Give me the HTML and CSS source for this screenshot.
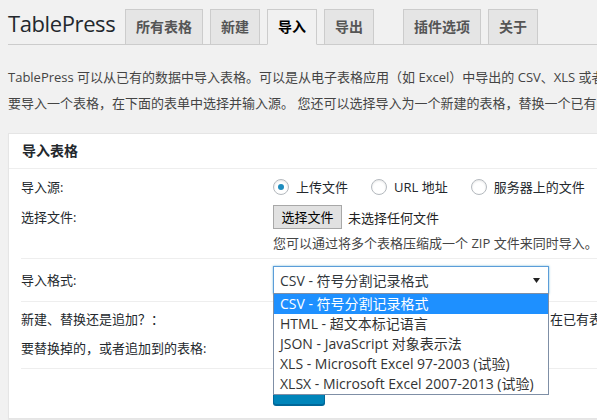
FILE: index.html
```html
<!DOCTYPE html>
<html lang="zh-CN">
<head>
<meta charset="utf-8">
<title>TablePress 导入</title>
<link rel="stylesheet" href="styles.css">
</head>
<body>
<div class="wrap">
  <div class="head">
    <h1 class="title">TablePress</h1>
    <nav class="tabs">
      <a class="tab">所有表格</a>
      <a class="tab">新建</a>
      <a class="tab active">导入</a>
      <a class="tab">导出</a>
      <span class="spacer"></span>
      <a class="tab">插件选项</a>
      <a class="tab">关于</a>
    </nav>
  </div>
  <p class="intro">TablePress 可以从已有的数据中导入表格。可以是从电子表格应用（如 Excel）中导出的 CSV、XLS 或者 XLSX 文件，也可以是 HTML 或 JSON 文件。</p>
  <p class="intro">要导入一个表格，在下面的表单中选择并输入源。 您还可以选择导入为一个新建的表格，替换一个已有的表格，或者将数据追加到一个已有的表格。</p>

  <div class="postbox">
    <h2 class="postbox-title">导入表格</h2>
    <div class="inside">
      <div class="row row-source">
        <div class="label">导入源:</div>
        <div class="field radios">
          <label class="radio-item"><span class="radio checked"></span>上传文件</label>
          <label class="radio-item"><span class="radio"></span>URL 地址</label>
          <label class="radio-item"><span class="radio"></span>服务器上的文件</label>
        </div>
      </div>
      <div class="row row-file sep">
        <div class="label label-file">选择文件:</div>
        <div class="field">
          <div class="file-line">
            <span class="file-btn">选择文件</span>
            <span class="file-name">未选择任何文件</span>
          </div>
          <div class="description">您可以通过将多个表格压缩成一个 ZIP 文件来同时导入。</div>
        </div>
      </div>
      <div class="row row-format sep">
        <div class="label">导入格式:</div>
        <div class="field">
          <div class="select-wrap">
            <div class="select">
              <span>CSV - 符号分割记录格式</span>
              <svg class="arrow" width="7" height="5" viewBox="0 0 7 5"><polygon points="0,0 7,0 3.5,5" fill="#222"/></svg>
            </div>
            <ul class="dropdown">
              <li class="option selected">CSV - 符号分割记录格式</li>
              <li class="option">HTML - 超文本标记语言</li>
              <li class="option">JSON - JavaScript 对象表示法</li>
              <li class="option">XLS - Microsoft Excel 97-2003 (试验)</li>
              <li class="option">XLSX - Microsoft Excel 2007-2013 (试验)</li>
            </ul>
          </div>
        </div>
      </div>
      <div class="row row-type">
        <div class="label">新建、替换还是追加？：</div>
        <div class="field radios radios-wide">
          <label class="radio-item"><span class="radio checked"></span>新建表格</label>
          <label class="radio-item"><span class="radio"></span>替换已有表格</label>
          <label class="radio-item"><span class="radio"></span>在已有表格后追加</label>
        </div>
      </div>
      <div class="row row-target sep">
        <div class="label">要替换掉的，或者追加到的表格:</div>
        <div class="field"></div>
      </div>
      <div class="row row-submit">
        <div class="label"></div>
        <div class="field"><span class="button-primary">导入</span></div>
      </div>
    </div>
  </div>
</div>
</body>
</html>
```

FILE: styles.css
```css
html, body {
  margin: 0;
  padding: 0;
}

body {
  width: 597px;
  height: 420px;
  overflow: hidden;
  background: #f1f1f1;
  color: #444;
  font-family: "Open Sans", "Noto Sans CJK SC", sans-serif;
  font-size: 13px;
}

.wrap {
  width: 1000px;
  padding-left: 8px;
}

/* header + tabs */
.head {
  display: flex;
  align-items: flex-end;
  height: 44px;
  border-bottom: 1px solid #ccc;
}

.title {
  flex: 0 0 117px;
  align-self: flex-start;
  margin: 0;
  padding-top: 9px;
  font-size: 22px;
  font-weight: 400;
  letter-spacing: -0.4px;
  line-height: 29px;
  color: #23282d;
}

.tabs {
  display: flex;
  align-items: flex-end;
}

.tab {
  display: block;
  margin: 0 7px -1px 0;
  padding: 5px 10px;
  border: 1px solid #ccc;
  background: #e5e5e5;
  color: #555;
  font-size: 14px;
  font-weight: 600;
  line-height: 24px;
}

.tab.active {
  background: #f1f1f1;
  border-bottom-color: #f1f1f1;
  color: #000;
}

.spacer {
  width: 22px;
}

/* intro */
.intro {
  margin: 22px 0 0;
  line-height: 20px;
  white-space: nowrap;
}

.intro + .intro {
  margin-top: 6px;
}

/* postbox */
.postbox {
  width: 900px;
  margin-top: 20px;
  background: #fff;
  border: 1px solid #e5e5e5;
  box-shadow: 0 1px 1px rgba(0, 0, 0, 0.04);
}

.postbox-title {
  margin: 0;
  padding: 0 13px;
  height: 34px;
  line-height: 34px;
  font-size: 14px;
  font-weight: 600;
  color: #23282d;
  border-bottom: 1px solid #eee;
}

.inside {
  padding: 0 12px;
}

.row {
  display: flex;
  color: #23282d;
}

.row.sep {
  border-bottom: 1px solid #eee;
}

.label {
  flex: 0 0 252px;
  line-height: 20px;
}

.field {
  flex: 1;
}

.row-source {
  padding-top: 8px;
  line-height: 20px;
}

.row-file {
  padding: 8px 0 5px;
}

.label-file {
  line-height: 24px;
}

.row-format {
  padding: 7px 0;
  align-items: center;
}

.row-type {
  padding-top: 7px;
  line-height: 20px;
}

.row-target {
  padding: 9px 0 10px;
  line-height: 20px;
}

.row-submit {
  padding: 6px 0 13px;
}

/* radios */
.radios {
  display: flex;
  align-items: center;
  height: 20px;
}

.radio-item {
  display: flex;
  align-items: center;
  margin-right: 23px;
}

.radios-wide .radio-item {
  margin-right: 39px;
}

.radio {
  position: relative;
  width: 14px;
  height: 14px;
  margin-right: 7px;
  border: 1px solid #b4b9be;
  border-radius: 50%;
  background: #fff;
  box-shadow: inset 0 1px 2px rgba(0, 0, 0, 0.1);
}

.radio.checked::before {
  content: "";
  position: absolute;
  left: 4px;
  top: 4px;
  width: 6px;
  height: 6px;
  border-radius: 50%;
  background: #1e8cbe;
}

/* file input */
.file-line {
  display: flex;
  align-items: center;
  height: 24px;
}

.file-btn {
  box-sizing: border-box;
  height: 24px;
  padding: 0 7.5px;
  border: 1px solid #a8a8a8;
  background: #e1e1e1;
  color: #000;
  line-height: 22px;
}

.file-name {
  margin-left: 6px;
  color: #222;
}

.description {
  margin-top: 4px;
  line-height: 20px;
  color: #444;
}

/* select */
.select-wrap {
  position: relative;
  width: 276px;
}

.select {
  box-sizing: border-box;
  display: flex;
  align-items: center;
  justify-content: space-between;
  height: 28px;
  padding: 0 8px 0 6px;
  border: 1px solid #5b9dd9;
  box-shadow: 0 0 2px rgba(30, 140, 190, 0.6);
  background: #fff;
  color: #32373c;
  font-size: 14px;
}

.arrow {
  display: block;
  margin-top: 1px;
}

.dropdown {
  position: absolute;
  z-index: 10;
  left: 0;
  top: 27px;
  box-sizing: border-box;
  width: 276px;
  margin: 0;
  padding: 0;
  list-style: none;
  background: #fff;
  border: 1px solid #7f8fa6;
}

.option {
  height: 20px;
  padding-left: 6px;
  line-height: 20px;
  font-size: 14px;
  color: #333;
  white-space: nowrap;
}

.option.selected {
  background: #1e90ff;
  color: #fff;
}

/* primary button */
.button-primary {
  display: inline-block;
  box-sizing: border-box;
  height: 30px;
  padding: 0 12px 3px;
  border: 1px solid #006799;
  border-radius: 3px;
  background: #0085ba;
  box-shadow: 0 1px 0 #006799;
  color: #fff;
  line-height: 25px;
}
```
